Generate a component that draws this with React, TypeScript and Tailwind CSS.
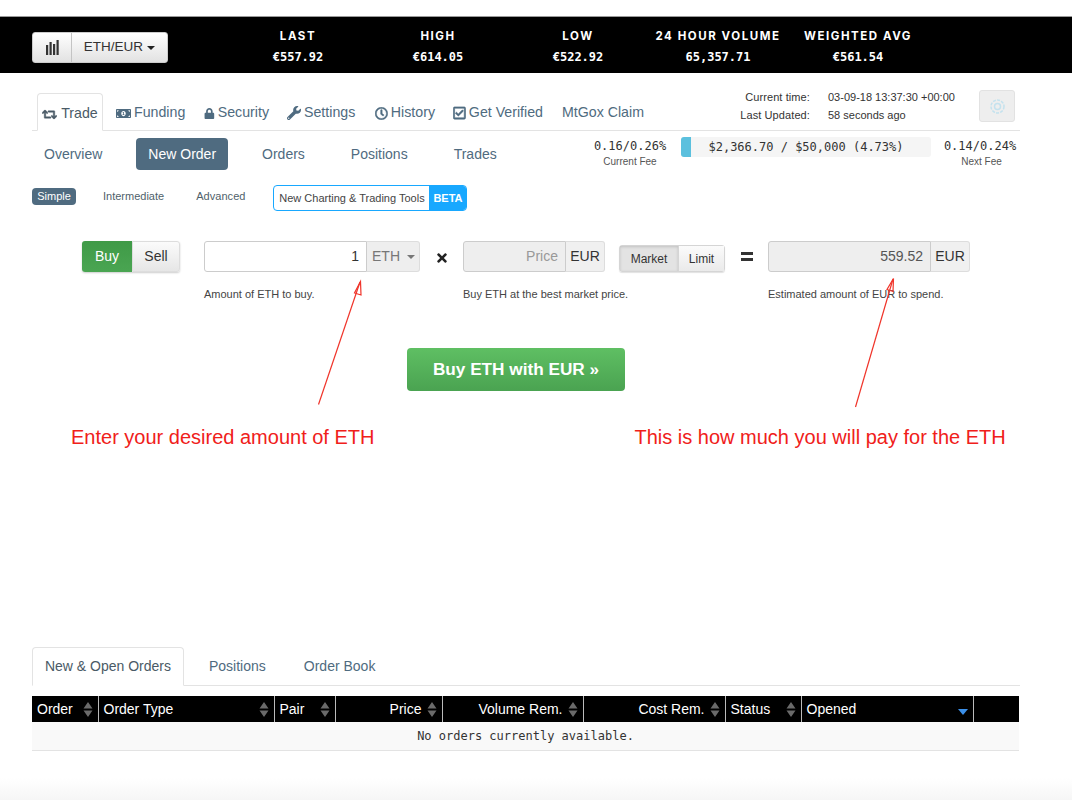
import React from "react";
import { FaRetweet, FaMoneyBillAlt, FaLock, FaWrench, FaRegClock, FaRegCheckSquare, FaTimes } from "react-icons/fa";

const sans = "font-['Liberation_Sans',Arial,sans-serif]";
const mono = "font-['DejaVu_Sans_Mono',monospace]";

function Tick({ label, value }: { label: string; value: string }) {
  return (
    <div className="w-[140px] flex flex-col items-center text-white">
      <div className="font-['Inter',sans-serif] text-[11.5px] font-bold tracking-[1.55px] leading-[16px]">{label}</div>
      <div className={`${mono} text-[12px] font-bold leading-[16px] mt-[5px]`}>{value}</div>
    </div>
  );
}

function Sort({ active }: { active?: boolean }) {
  return active ? (
    <svg width="10" height="16" viewBox="0 0 10 16" className="shrink-0">
      <path d="M0 8h10L5 14z" fill="#3b8fe8" />
    </svg>
  ) : (
    <svg width="10" height="17" viewBox="0 0 10 17" className="shrink-0">
      <path d="M5 1L9.500 7.500H.5z M5 16L.5 9.500h9z" fill="#6a6a6a" />
    </svg>
  );
}

const cols = [
  { t: "Order", w: "w-[66px]" },
  { t: "Order Type", w: "w-[176px]" },
  { t: "Pair", w: "w-[61px]" },
  { t: "Price", w: "w-[107px]", r: true },
  { t: "Volume Rem.", w: "w-[141px]", r: true },
  { t: "Cost Rem.", w: "w-[142px]", r: true },
  { t: "Status", w: "w-[76px]" },
  { t: "Opened", w: "w-[172px]", active: true },
  { t: "", w: "w-[46px]" },
];

function MainTab({ icon, label, cls }: { icon?: React.ReactNode; label: string; cls: string }) {
  return (
    <div className={`flex items-center gap-[3px] text-[14.2px] text-[#4f6b80] h-[35px] pt-px whitespace-nowrap ${cls}`}>
      {icon}
      <span>{label}</span>
    </div>
  );
}

export default function App() {
  return (
    <div className={`${sans} relative min-h-[800px] bg-white text-[#333] overflow-hidden`}>
      <div className="h-[16px]" />
      <div className="h-[57px] bg-black border-t border-[#9a9a9a] flex items-center pl-[32px]">
        <div className="w-[136px] h-[31px] mt-[5px] flex rounded-[3px] bg-gradient-to-b from-white to-[#e2e2e2] border border-[#ccc] text-[#333]">
          <div className="w-[39px] flex items-center justify-center border-r border-[#c4c4c4]">
            <svg width="13" height="15" viewBox="0 0 13 15">
              <path d="M0 5h2.200v10H0zM3.500 2h2.200v13H3.500zM7 4h2.200v11H7zM10.500 0h2.200v15h-2.200z" fill="#333" />
            </svg>
          </div>
          <div className="flex-1 flex items-center justify-center gap-[4px] text-[13.500px]">
            ETH/EUR
            <span className="w-0 h-0 border-x-[4px] border-x-transparent border-t-[4px] border-t-[#222]" />
          </div>
        </div>
        <div className="flex ml-[60px] pt-[3px]">
          <Tick label="LAST" value="€557.92" />
          <Tick label="HIGH" value="€614.05" />
          <Tick label="LOW" value="€522.92" />
          <Tick label="24 HOUR VOLUME" value="65,357.71" />
          <Tick label="WEIGHTED AVG" value="€561.54" />
        </div>
      </div>

      <div className="w-[988px] ml-[32px]">
        <div className="h-[58px] flex items-end border-b border-[#e3e3e3] relative">
          <div className="ml-[5px] w-[66px] h-[38px] flex items-center justify-center gap-[4px] pt-[4px] bg-white border border-[#e3e3e3] border-b-white rounded-t-[4px] text-[14.2px] text-[#4a5a66] -mb-px">
            <FaRetweet size={15} stroke="currentColor" strokeWidth={18} />
            Trade
          </div>
          <MainTab cls="ml-[13px] w-[70px]" icon={<FaMoneyBillAlt size={15} />} label="Funding" />
          <MainTab cls="ml-[18px] w-[65px]" icon={<FaLock size={11} />} label="Security" />
          <MainTab cls="ml-[18px] w-[69px]" icon={<FaWrench size={14} />} label="Settings" />
          <MainTab cls="ml-[19px] w-[60px]" icon={<FaRegClock size={13} stroke="currentColor" strokeWidth={22} />} label="History" />
          <MainTab cls="ml-[18px] w-[90px]" icon={<FaRegCheckSquare size={14} stroke="currentColor" strokeWidth={22} />} label="Get Verified" />
          <MainTab cls="ml-[19px]" label="MtGox Claim" />
          <div className="ml-auto self-start mt-[15px] flex text-[11px] leading-[18px] text-[#333]">
            <div className="text-right w-[80px] whitespace-nowrap tracking-[0.1px]">
              <div>Current time:</div>
              <div>Last Updated:</div>
            </div>
            <div className="ml-[18px] w-[151px]">
              <div>03-09-18 13:37:30 +00:00</div>
              <div>58 seconds ago</div>
            </div>
            <div className="mr-[5px] mt-[2px] w-[36px] h-[32px] rounded-[3px] bg-[#eeeeee] border border-[#e2e2e2] flex items-center justify-center">
              <svg width="17" height="17" viewBox="0 0 17 17" fill="none" stroke="#c4e2ee" strokeWidth="1.500">
                <circle cx="8.500" cy="8.500" r="6.500" strokeDasharray="3 1.200" />
                <circle cx="8.500" cy="8.500" r="3" />
              </svg>
            </div>
          </div>
        </div>

        <div className="flex items-start mt-[6px]">
          <div className="flex gap-[22px] text-[14px] text-[#4f6b80] mt-[1px]">
            <div className="h-[32px] px-[12px] pt-px flex items-center">Overview</div>
            <div className="h-[32px] px-[12px] pt-px flex items-center rounded-[4px] bg-[#4f6b80] text-white">New Order</div>
            <div className="h-[32px] px-[12px] pt-px flex items-center">Orders</div>
            <div className="h-[32px] px-[12px] pt-px flex items-center">Positions</div>
            <div className="h-[32px] px-[12px] pt-px flex items-center">Trades</div>
          </div>
          <div className="ml-auto flex items-start">
            <div className="w-[80px] flex flex-col items-center mr-[11px] mt-[2px]">
              <div className={`${mono} text-[12px] leading-[15px] whitespace-nowrap`}>0.16/0.26%</div>
              <div className="text-[10px] text-[#555] mt-[1px] leading-[14px]">Current Fee</div>
            </div>
            <div className="w-[250px] h-[20px] rounded-[3px] bg-[#f5f5f5] relative flex items-center justify-center">
              <div className="absolute left-0 top-0 bottom-0 w-[10px] rounded-l-[3px] bg-[#5bc0de]" />
              <span className={`${mono} text-[12px] whitespace-nowrap`}>$2,366.70 / $50,000 (4.73%)</span>
            </div>
            <div className="w-[80px] flex flex-col items-center ml-[9px] mt-[2px]">
              <div className={`${mono} text-[12px] leading-[15px] whitespace-nowrap`}>0.14/0.24%</div>
              <div className="text-[10px] text-[#555] mt-[1px] ml-[3px] leading-[14px]">Next Fee</div>
            </div>
          </div>
        </div>

        <div className="flex items-start mt-[15px] h-[26px] text-[11px] text-[#4f5f6b]">
          <div className="w-[44px] h-[17px] mt-[3px] rounded-[4px] bg-[#4f6b80] text-white flex items-center justify-center">Simple</div>
          <div className="ml-[27px] h-[17px] mt-[3px] flex items-center">Intermediate</div>
          <div className="ml-[32px] h-[17px] mt-[3px] flex items-center tracking-[0.05px]">Advanced</div>
          <div className="ml-[28px] w-[194px] h-[26px] flex rounded-[4px] border border-[#18a8ff] overflow-hidden">
            <div className="flex-1 flex items-center justify-center text-[#444] text-[11px] whitespace-nowrap">New Charting &amp; Trading Tools</div>
            <div className="w-[37px] bg-[#18a8ff] text-white font-bold flex items-center justify-center">BETA</div>
          </div>
        </div>

        <div className="flex mt-[30px] ml-[50px]">
          <div className="flex flex-col">
            <div className="flex h-[31px] w-[98px] rounded-[3px] shadow-[0_1px_2px_rgba(0,0,0,0.2)] text-[14px]">
              <div className="w-[50px] rounded-l-[3px] bg-gradient-to-b from-[#3f9a47] to-[#4aa552] text-white flex items-center justify-center">Buy</div>
              <div className="flex-1 rounded-r-[3px] bg-gradient-to-b from-[#fbfbfb] to-[#e6e6e6] border border-[#ddd] flex items-center justify-center">Sell</div>
            </div>
          </div>

          <div className="ml-[24px] w-[216px]">
            <div className="flex h-[31px] text-[14px]">
              <div className="flex-1 border border-[#ccc] rounded-l-[3px] bg-white flex items-center justify-end pr-[7px]">1</div>
              <div className="w-[53px] bg-[#eeeeee] border border-l-0 border-[#ddd] rounded-r-[3px] flex items-center pl-[5px] gap-[7px] text-[#777]">
                ETH
                <span className="w-0 h-0 border-x-[4px] border-x-transparent border-t-[4px] border-t-[#777]" />
              </div>
            </div>
            <div className="text-[11px] text-[#444] mt-[15px] leading-[14px]">Amount of ETH to buy.</div>
          </div>

          <div className="w-[43px] h-[31px] pt-[3px] flex items-center justify-center text-[#222]">
            <FaTimes size={14} />
          </div>

          <div className="w-[142px]">
            <div className="flex h-[31px] text-[14px]">
              <div className="flex-1 border border-[#ccc] rounded-l-[3px] bg-[#eeeeee] text-[#999] flex items-center justify-end pr-[7px]">Price</div>
              <div className="w-[39px] bg-[#f0f0f0] border border-l-0 border-[#ddd] rounded-r-[3px] flex items-center justify-center">EUR</div>
            </div>
            <div className="text-[11px] text-[#444] mt-[15px] leading-[14px] whitespace-nowrap">Buy ETH at the best market price.</div>
          </div>

          <div className="ml-[14px] mt-[4px] w-[106px] h-[27px] flex rounded-[3px] border border-[#d5d5d5] text-[12px] shadow-[0_1px_1px_rgba(0,0,0,0.12)]">
            <div className="w-[59px] bg-[#e3e3e3] flex items-center justify-center border-r border-[#d5d5d5] shadow-[inset_0_1px_3px_rgba(0,0,0,0.15)]">Market</div>
            <div className="flex-1 bg-gradient-to-b from-[#fbfbfb] to-[#eaeaea] flex items-center justify-center">Limit</div>
          </div>

          <div className="w-[43px] h-[31px] flex items-center justify-center">
            <div className="w-[12px] h-[9px] border-y-[3px] border-[#333]" />
          </div>

          <div className="w-[202px]">
            <div className="flex h-[31px] text-[14px]">
              <div className="flex-1 border border-[#ccc] rounded-l-[3px] bg-[#eeeeee] text-[#555] flex items-center justify-end pr-[7px]">559.52</div>
              <div className="w-[39px] bg-[#f0f0f0] border border-l-0 border-[#ddd] rounded-r-[3px] flex items-center justify-center">EUR</div>
            </div>
            <div className="text-[11px] text-[#444] mt-[15px] leading-[14px] whitespace-nowrap">Estimated amount of EUR to spend.</div>
          </div>
        </div>

        <div className="flex justify-center mt-[47px]">
          <div className="w-[218px] h-[43px] ml-[-20px] rounded-[4px] bg-gradient-to-b from-[#5fbf63] to-[#4aa351] text-white font-bold text-[17.200px] flex items-center justify-center">
            Buy ETH with EUR »
          </div>
        </div>

        <div className="flex mt-[34px] text-[20px] leading-[24px] text-[#f0201a]">
          <div className="ml-[39px]">Enter your desired amount of ETH</div>
          <div className="ml-[260px]">This is how much you will pay for the ETH</div>
        </div>

        <div className="mt-[198px] h-[39px] flex items-end border-b border-[#e3e3e3] text-[14px] text-[#4f6b80]">
          <div className="w-[152px] h-[39px] flex items-center justify-center rounded-t-[4px] border border-[#e3e3e3] border-b-white bg-white -mb-px text-[#4a5a66]">New &amp; Open Orders</div>
          <div className="h-[38px] flex items-center ml-[25px]">Positions</div>
          <div className="h-[38px] flex items-center ml-[38px]">Order Book</div>
        </div>

        <table className="mt-[10px] w-[987px] table-fixed border-collapse">
          <thead>
            <tr className="bg-black text-white text-[14px] h-[26px]">
              {cols.map((c, i) => (
                <th key={i} className={`${c.w} font-normal p-0 border-l border-[#bbb] first:border-l-0`}>
                  {c.t && (
                    <div className={`flex items-center px-[5px] ${c.r ? "justify-end gap-[5px]" : "justify-between"}`}>
                      <span>{c.t}</span>
                      <Sort active={c.active} />
                    </div>
                  )}
                </th>
              ))}
            </tr>
          </thead>
          <tbody>
            <tr>
              <td colSpan={9} className={`${mono} h-[28px] p-0 text-center text-[12px] text-[#333] bg-[#f9f9f9] border-b border-[#e3e3e3]`}>
                No orders currently available.
              </td>
            </tr>
          </tbody>
        </table>
      </div>

      <div className="absolute left-0 right-0 bottom-0 h-[22px] bg-gradient-to-b from-white to-[#f6f6f6]" />

      <svg className="absolute left-0 top-0 pointer-events-none" width="1072" height="800" fill="none" stroke="#f0342a" strokeWidth="1.200">
        <path d="M318.500 404.500L360 282" />
        <path d="M360.500 281.500L354.500 293L361 295Z" />
        <path d="M855.500 407L893 279" />
        <path d="M893.500 278.500L887 289.500L893 291.500Z" />
      </svg>
    </div>
  );
}
